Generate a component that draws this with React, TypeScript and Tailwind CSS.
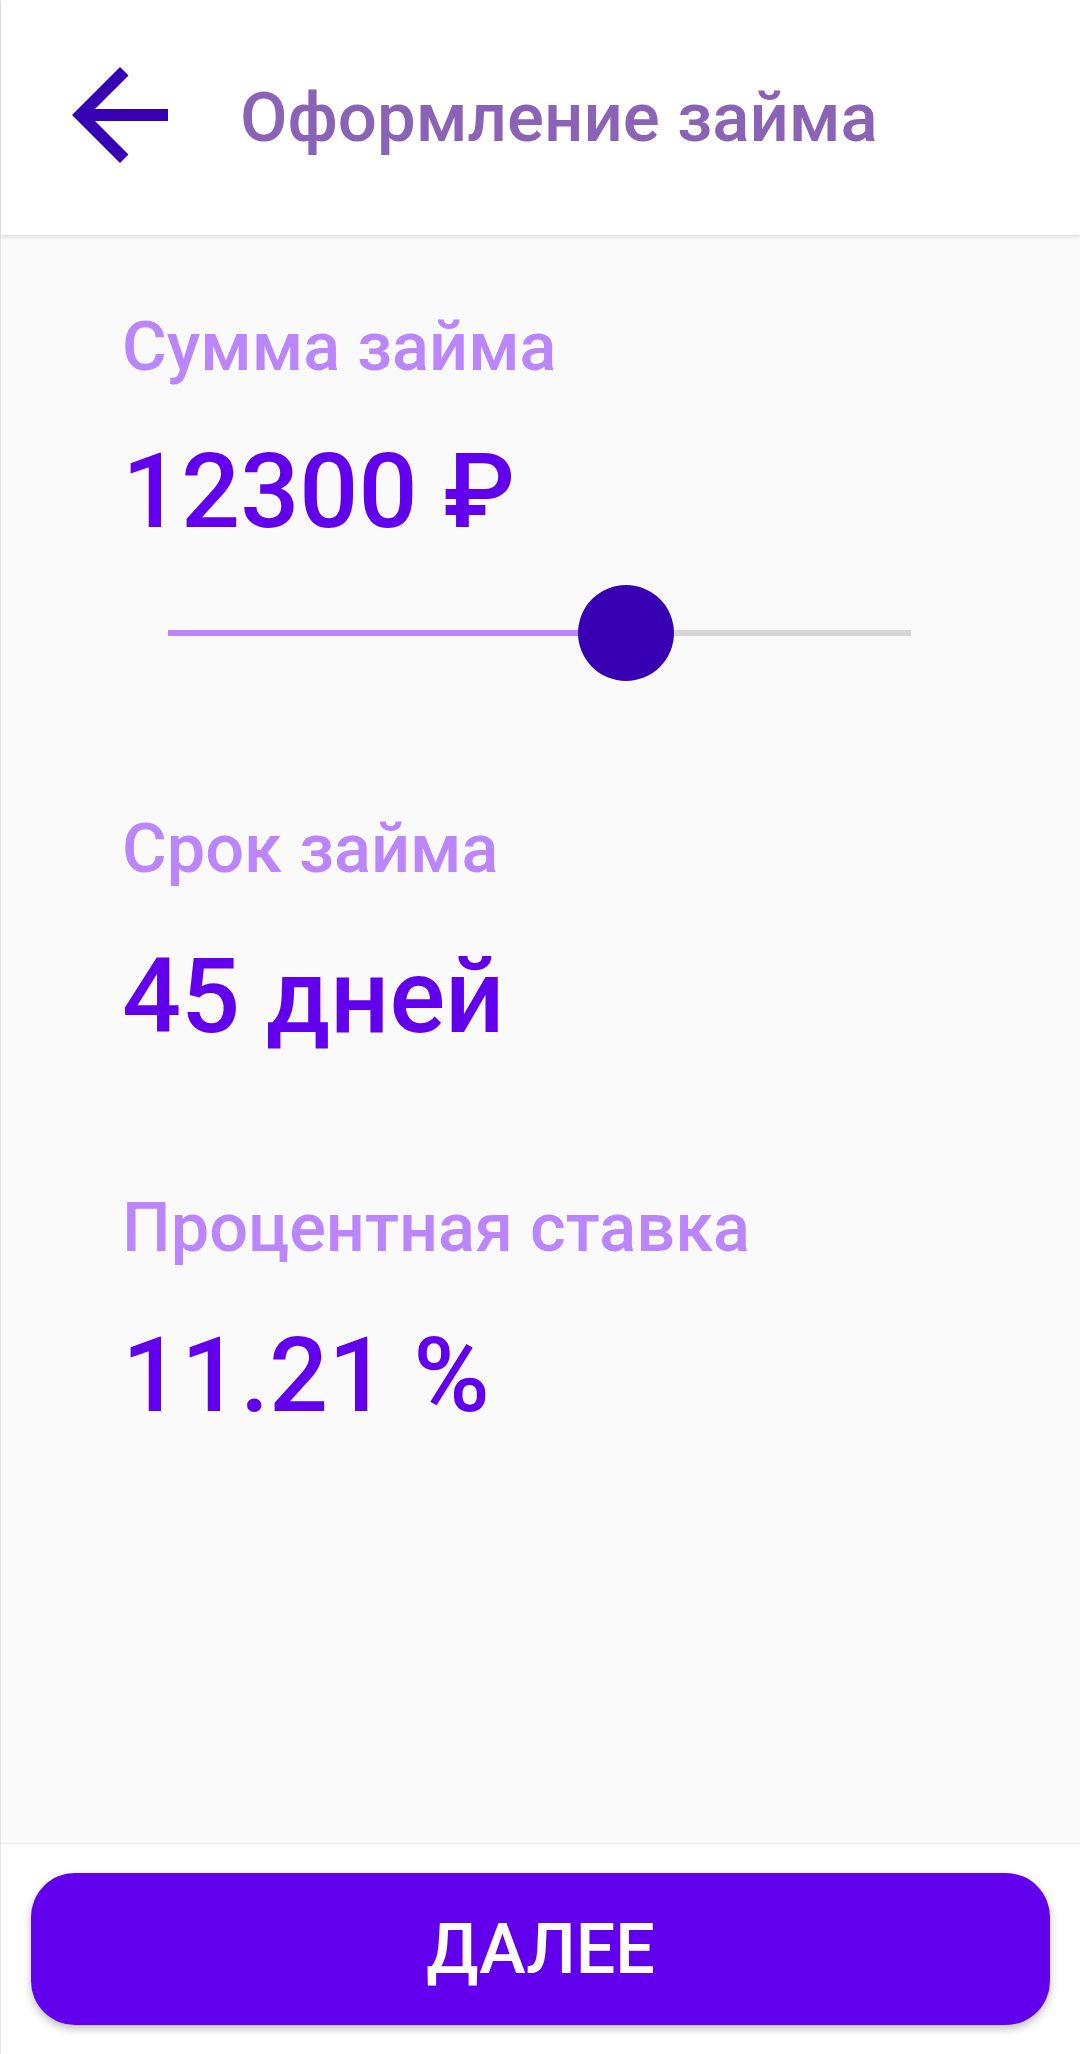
import { useState } from "react";

const Field = ({ label, value, gap, className }: { label: string; value: string; gap: string; className?: string }) => (
  <div className={className}>
    <p className="text-[68.5px] leading-none font-medium text-[#bb86fc]">{label}</p>
    <p className={`${gap} text-[104px] leading-none font-medium text-[#6200ee]`}>{value}</p>
  </div>
);

export default function App() {
  const [amount] = useState(61.6);

  return (
    <div
      className="w-[1080px] h-[2054px] flex flex-col bg-[#fafafa] border-l border-[#e6e6e6]"
      style={{ fontFamily: "Roboto, 'Noto Sans', sans-serif" }}
    >
      <header className="h-[235px] shrink-0 bg-white flex items-center pl-[47px] shadow-[0_2px_4px_rgba(0,0,0,0.12)] relative z-10">
        <svg width="144" height="144" viewBox="0 0 24 24" className="shrink-0 -mt-[5px]">
          <path fill="#3700b3" d="M20 11H7.83l5.59-5.59L12 4l-8 8 8 8 1.41-1.41L7.83 13H20v-2z" />
        </svg>
        <h1 className="ml-[48px] text-[69px] leading-none font-medium text-[#8a62b6]">Оформление займа</h1>
      </header>

      <main className="flex-1 pl-[121px] pt-[78px]">
        <Field label="Сумма займа" value="12300 ₽" gap="mt-[58px]" />

        <div className="mt-[41px] ml-[46px] w-[743px] h-[96px] relative">
          <div className="absolute left-0 right-0 top-[45px] h-[6px] bg-[#d6d6d6]" />
          <div className="absolute left-0 top-[45px] h-[6px] bg-[#bb86fc]" style={{ width: `${amount}%` }} />
          <div
            className="absolute top-0 w-[96px] h-[96px] -ml-[48px] rounded-full bg-[#3700b3]"
            style={{ left: `${amount}%` }}
          />
        </div>

        <Field label="Срок займа" value="45 дней" gap="mt-[62px]" className="mt-[134px]" />
        <Field label="Процентная ставка" value="11.21 %" gap="mt-[61px]" className="mt-[145px]" />
      </main>

      <footer className="h-[211px] shrink-0 bg-white border-t border-[#ececec] px-[30px] pt-[29px]">
        <button className="w-full h-[152px] rounded-[44px] bg-[#6200ee] text-white text-[70px] leading-none font-medium shadow-[0_4px_8px_rgba(0,0,0,0.25)]">
          ДАЛЕЕ
        </button>
      </footer>
    </div>
  );
}
